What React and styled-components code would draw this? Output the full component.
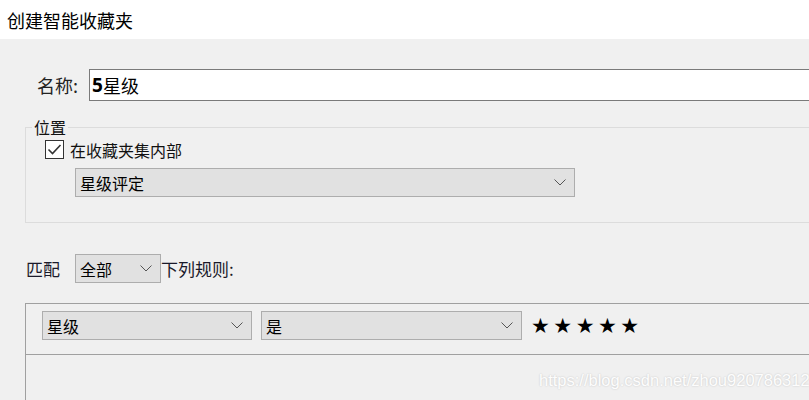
import React from "react"
import styled, { createGlobalStyle } from "styled-components"

const GlobalStyle = createGlobalStyle`
  html, body {
    margin: 0;
    padding: 0;
    background: #f0f0f0;
    font-family: "Noto Sans CJK SC", "Liberation Sans", sans-serif;
    color: #111;
  }
`

const Window = styled.div`
  position: relative;
  width: 809px;
  height: 400px;
  overflow: hidden;
  background: #f0f0f0;
`

const TitleBar = styled.div`
  height: 39px;
  background: #fff;
  display: flex;
  align-items: center;
  padding-left: 7px;
  font-size: 18px;
  color: #000;
`

const Body = styled.div`
  display: flex;
  flex-direction: column;
  padding: 30px 0 0 25px;
`

const NameRow = styled.div`
  display: flex;
  align-items: center;
  height: 32px;
`

const NameLabel = styled.label`
  flex: none;
  margin-left: 12px;
  white-space: nowrap;
  font-size: 18px;
  color: #222;
`

const NameInput = styled.div`
  flex: none;
  width: 760px;
  height: 30px;
  margin-left: 11px;
  border: 1px solid #7a7a7a;
  background: #fff;
  display: flex;
  align-items: center;
  padding-left: 2px;
  font-size: 18px;
  color: #000;

  b {
    font-family: "Noto Sans", sans-serif;
    font-weight: 700;
    font-size: 19px;
  }
`

const Group = styled.fieldset`
  margin: 17px -40px 0 0;
  padding: 3px 0 25px 19px;
  border: 1px solid #dcdcdc;
  min-width: 0;
`

const Legend = styled.legend`
  margin-left: -13px;
  padding: 0 2px;
  font-size: 16px;
  line-height: 18px;
  color: #111;
`

const CheckRow = styled.label`
  display: flex;
  align-items: center;
  gap: 6px;
  font-size: 16px;
  height: 21px;
  color: #111;
`

const CheckBox = styled.span`
  width: 17px;
  height: 17px;
  border: 1px solid #333;
  background: #fff;
  display: flex;
  align-items: center;
  justify-content: center;
`

const Select = styled.div`
  box-sizing: border-box;
  width: ${p => p.$w}px;
  height: 29px;
  border: 1px solid #adadad;
  background: #e1e1e1;
  display: flex;
  align-items: center;
  justify-content: space-between;
  padding: 0 8px 0 4px;
  font-size: 16px;
  color: #000;
  flex: none;
`

const PlaceSelect = styled(Select)`
  margin: 8px 0 0 30px;
`

const MatchRow = styled.div`
  display: flex;
  align-items: center;
  margin-top: 31px;
  font-size: 17px;
  color: #1a1a2a;
`

const MatchLabel = styled.span`
  width: 49px;
  margin-left: 1px;
`

const RulesBox = styled.div`
  margin: 20px -40px 0 0;
  height: 120px;
  border: 1px solid #a0a0a0;
  border-bottom: none;
`

const RuleRow = styled.div`
  display: flex;
  align-items: center;
  gap: 9px;
  padding: 7px 0 14px 16px;
  border-bottom: 1px solid #a0a0a0;
`

const Stars = styled.span`
  font-family: "DejaVu Sans", sans-serif;
  font-size: 21px;
  letter-spacing: 3.5px;
  color: #000;
`

const Watermark = styled.div`
  position: absolute;
  left: 539px;
  top: 371px;
  font-family: "Liberation Sans", Arial, sans-serif;
  font-size: 16.5px;
  color: #fdfdfd;
  text-shadow: 0 0 2px rgba(0, 0, 0, 0.2);
`

const Chevron = () => (
  <svg width="12" height="7" viewBox="0 0 12 7">
    <polyline points="0.5,0.5 6,6 11.5,0.5" fill="none" stroke="#555" strokeWidth="1" />
  </svg>
)

const Check = () => (
  <svg width="15" height="13" viewBox="0 0 15 13">
    <polyline points="1.5,6.5 5.5,10.5 13.5,2" fill="none" stroke="#333" strokeWidth="1.6" />
  </svg>
)

const Dropdown = ({ w, children }) => (
  <Select $w={w}>
    <span>{children}</span>
    <Chevron />
  </Select>
)

const App = () => (
  <Window>
    <GlobalStyle />
    <TitleBar>创建智能收藏夹</TitleBar>
    <Body>
      <NameRow>
        <NameLabel>名称:</NameLabel>
        <NameInput>
          <b>5</b>星级
        </NameInput>
      </NameRow>

      <Group>
        <Legend>位置</Legend>
        <CheckRow>
          <CheckBox>
            <Check />
          </CheckBox>
          在收藏夹集内部
        </CheckRow>
        <PlaceSelect $w={500}>
          <span>星级评定</span>
          <Chevron />
        </PlaceSelect>
      </Group>

      <MatchRow>
        <MatchLabel>匹配</MatchLabel>
        <Dropdown w={86}>全部</Dropdown>
        <span>下列规则:</span>
      </MatchRow>

      <RulesBox>
        <RuleRow>
          <Dropdown w={210}>星级</Dropdown>
          <Dropdown w={261}>是</Dropdown>
          <Stars>★★★★★</Stars>
        </RuleRow>
      </RulesBox>
    </Body>
    <Watermark>https://blog.csdn.net/zhou920786312</Watermark>
  </Window>
)

export default App
